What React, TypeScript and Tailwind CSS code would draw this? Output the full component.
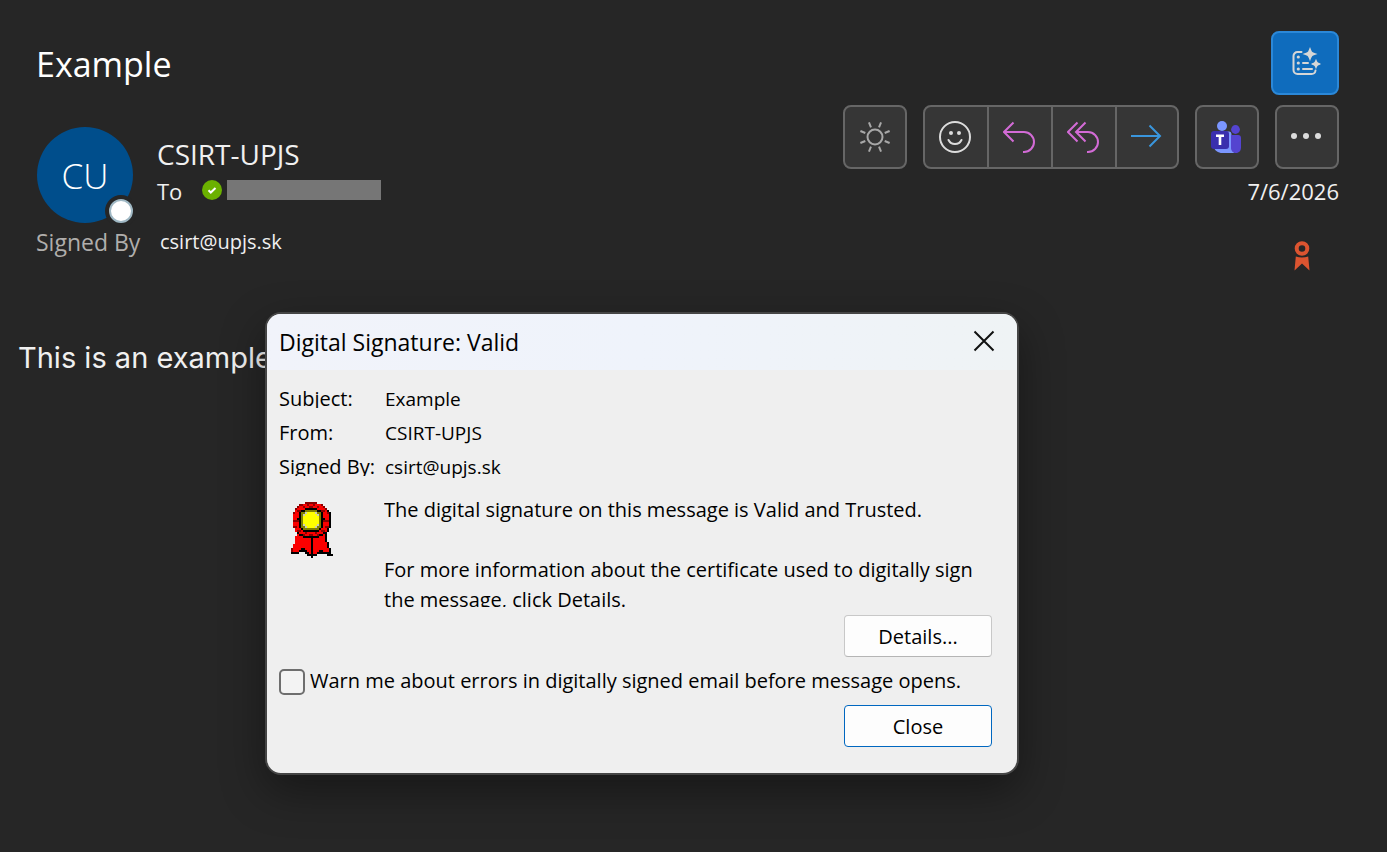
import React from "react";

const toolbarButton =
  "flex size-16 items-center justify-center rounded-lg border-2 border-[#666666] bg-[#363636]";
const groupButton = "flex h-full w-16 items-center justify-center border-r-2 border-[#666666]";
const dialogButton =
  "flex h-[42px] w-[148px] items-center justify-center rounded-sm border bg-[#fdfdfd] pt-0.5";

const ROSETTE = [
  ".......dddddd........",
  "....ddrrdrrdrrrd.....",
  "...drrdrrddrrdrrd....",
  "..drrrrKKKKKKrrrrd...",
  "..rddKKooooooKKddrK..",
  ".drrKoogyyyygooKrrdK.",
  ".rrrKogyyyyyygoKrrrK.",
  ".rrrKoyyyyyyyyoKrrrK.",
  ".rrKKoyyyyyyyyoKKrrK.",
  ".dddKoyyyyyyyyoKdddK.",
  ".rrrKoyyyyyyyyoKrrrK.",
  ".rrrKogyyyyyygoKrrrK.",
  ".ddrKoogyyyygooKrddK.",
  "..rrrKooooooooKrrrK..",
  "..rddrKKKKKKKKrddrK..",
  "...KrrrdrrrrdrrrKK...",
  "...rKKdrrddrrdKKrK...",
  "..rrrrKKKKKKKKrrrK...",
  "..rrrrrrrrKrrrrrrK...",
  "..rrrrrrrrKrrrrrrK...",
  "..rrrrrrrrKrrrrrrrK..",
  ".rrrrrrrrrKrrrrrrrK..",
  ".rrrrrrrrrKrrrrrrrK..",
  "drrrrKKrrrKrrrrrrrrK.",
  "drrrKKKKrrKrrrKKrrrK.",
  "KKKK...KKrKrrKKKKKKK.",
  "........KKKKK.....KKK",
  "..........K..........",
];
const ROSETTE_COLORS: Record<string, string> = {
  K: "#000000",
  r: "#fb0000",
  d: "#8b0000",
  o: "#808000",
  y: "#ffff00",
  g: "#c8c8c0",
};

function Rosette() {
  return (
    <svg className="h-14 w-[42px]" viewBox="0 0 21 28" shapeRendering="crispEdges" aria-hidden="true">
      {ROSETTE.flatMap((row, y) =>
        [...row].map((c, x) =>
          ROSETTE_COLORS[c] ? (
            <rect key={`${x}-${y}`} x={x} y={y} width="1" height="1" fill={ROSETTE_COLORS[c]} />
          ) : null,
        ),
      )}
    </svg>
  );
}

function SummaryIcon() {
  return (
    <svg className="size-8" viewBox="0 0 32 32" fill="none" aria-hidden="true">
      <path
        d="M12.500 5H8.500a4 4 0 0 0-4 4v14a4 4 0 0 0 4 4h14a4 4 0 0 0 4-3.500"
        stroke="#d6d6d6"
        strokeWidth="2"
        strokeLinecap="round"
      />
      <g fill="#d6d6d6">
        <circle cx="9.300" cy="10" r="1.600" />
        <circle cx="9.300" cy="16" r="1.600" />
        <circle cx="9.300" cy="22" r="1.600" />
        <path d="M21 0c.6 1.500 1.500 4.300 2.400 5 .9.700 3.300 1.300 5.100 2-1.800.8-4.200 1.300-5.100 2.100-.9.800-1.800 3.500-2.400 5.200-.6-1.700-1.500-4.400-2.400-5.200-.9-.8-3.300-1.300-5.100-2.100 1.800-.7 4.200-1.300 5.100-2C19.500 4.300 20.400 1.500 21 0Z" />
        <path d="M27 11.700c.5 1.300 1.100 2.900 1.800 3.500.7.500 2.200 1.100 3.200 1.800-1 .7-2.500 1.200-3.200 1.800-.7.600-1.300 2.200-1.800 3.500-.5-1.300-1.100-2.900-1.800-3.500-.7-.6-2.200-1.100-3.200-1.800 1-.7 2.500-1.300 3.200-1.800.7-.6 1.300-2.200 1.800-3.500Z" />
      </g>
      <path d="M14 16h5M14 22h9" stroke="#d6d6d6" strokeWidth="2" strokeLinecap="round" />
    </svg>
  );
}

function SunIcon() {
  return (
    <svg className="size-8" viewBox="0 0 32 32" fill="none" stroke="#a8a8a8" strokeWidth="2" aria-hidden="true">
      <circle cx="16" cy="16" r="7.500" />
      {[22.5, 67.5, 112.5, 157.5, 202.5, 247.5, 292.5, 337.5].map((a) => (
        <path key={a} d="M16 5.500V0.200" transform={`rotate(${a} 16 16)`} />
      ))}
    </svg>
  );
}

function SmileIcon() {
  return (
    <svg className="size-8" viewBox="0 0 32 32" fill="none" stroke="#dcdcdc" strokeWidth="2" aria-hidden="true">
      <circle cx="16" cy="16" r="15" />
      <path d="M9.500 19c2.800 5.400 10.200 5.400 13 0" strokeLinecap="round" />
      <circle cx="12" cy="12" r="2" fill="#dcdcdc" stroke="none" />
      <circle cx="20" cy="12" r="2" fill="#dcdcdc" stroke="none" />
    </svg>
  );
}

function ReplyIcon() {
  return (
    <svg className="size-8" viewBox="0 0 32 32" fill="none" stroke="#d36bd6" strokeWidth="2" aria-hidden="true">
      <path d="M10.500 1.500 1 11l9.500 9.500M1 11h20a10 10 0 0 1 0 20h-1" />
    </svg>
  );
}

function ReplyAllIcon() {
  return (
    <svg className="size-8" viewBox="0 0 32 32" fill="none" stroke="#d36bd6" strokeWidth="2" aria-hidden="true">
      <path d="M10.500 1.500 1 11l9.500 9.500M18.500 1.500 9 11l9.500 9.500M9 11h12a10 10 0 0 1 0 20h-1" />
    </svg>
  );
}

function ForwardIcon() {
  return (
    <svg className="size-8" viewBox="0 0 32 32" fill="none" stroke="#3a96dd" strokeWidth="2" aria-hidden="true">
      <path d="M1 15h29M19.500 4.500 30 15 19.500 25.500" />
    </svg>
  );
}

function TeamsIcon() {
  return (
    <svg className="size-8" viewBox="0 0 32 32" aria-hidden="true">
      <circle cx="24.500" cy="8.500" r="4.400" fill="#5444d0" />
      <circle cx="11" cy="5" r="5" fill="#7b96ff" />
      <path d="M14 10.500h4c1.700 0 2.500 1.300 2.500 3V26c0 3.500 1.500 5 3.500 6H11.500C7 32 3.500 29.500 3 26Z" fill="#7b96ff" />
      <path d="M20 14h7c2 0 3 1.200 3 3v9.500c0 3.200-2 5.500-5 5.500s-5-2.300-5-5.500Z" fill="#5444d0" />
      <rect x="0" y="10" width="18" height="18" rx="3" fill="#3a2fae" />
      <path d="M5 14.800h8M9 14.800V24" stroke="#fff" strokeWidth="2.600" />
    </svg>
  );
}

function Presence() {
  return (
    <svg className="size-5" viewBox="0 0 20 20" aria-hidden="true">
      <circle cx="10" cy="10" r="10" fill="#6bb100" />
      <path d="m6.500 10.200 2.300 2.300L13.500 8" fill="none" stroke="#fff" strokeWidth="2" />
    </svg>
  );
}

function SignedBadge() {
  return (
    <svg className="h-[30px] w-4" viewBox="0 0 16 30" aria-hidden="true">
      <circle cx="8" cy="7.500" r="5.300" fill="none" stroke="#dc5430" strokeWidth="4" />
      <path d="M1.800 15.500q6.200 2 12.400 0l1.300 14L8 22.500.5 29.500Z" fill="#dc5430" />
    </svg>
  );
}

function SignatureDialog() {
  return (
    <section
      role="dialog"
      aria-labelledby="dialog-title"
      className="absolute top-[312px] left-[265px] w-[754px] overflow-hidden rounded-2xl border-2 border-[#454545] bg-[#efefef] text-[20px] text-black shadow-[0_16px_44px_rgba(0,0,0,0.4)]"
    >
      <header className="flex h-14 items-center justify-between bg-linear-to-r from-[#f1f3fa] via-[#eff3fb] to-[#eff3f5] pr-[19px] pl-3">
        <h2 id="dialog-title" className="text-[23px]">
          Digital Signature: Valid
        </h2>
        <button aria-label="Close dialog" className="flex size-7 items-start justify-center">
          <svg className="size-6" viewBox="0 0 24 24" stroke="#111" strokeWidth="2" aria-hidden="true">
            <path d="m2.500 3.500 19 19M21.500 3.500l-19 19" />
          </svg>
        </button>
      </header>
      <div className="pt-[15px] pr-[25px] pb-[26px] pl-3">
        <dl className="grid auto-rows-[34px] grid-cols-[106px_1fr] leading-7">
          <dt className="h-[23px] overflow-hidden whitespace-nowrap">Subject:</dt>
          <dd className="text-[19px]">Example</dd>
          <dt className="whitespace-nowrap">From:</dt>
          <dd className="text-[19px]">CSIRT-UPJS</dd>
          <dt className="h-[23px] overflow-hidden whitespace-nowrap">Signed By:</dt>
          <dd className="text-[19px]">csirt@upjs.sk</dd>
        </dl>
        <div className="mt-2 flex">
          <div className="w-[105px] shrink-0 pt-[7px] pl-3">
            <Rosette />
          </div>
          <div className="h-[112px] overflow-hidden leading-[30px]">
            <p>The digital signature on this message is Valid and Trusted.</p>
            <p className="mt-[30px]">
              For more information about the certificate used to digitally sign
              <br />
              the message, click Details.
            </p>
          </div>
        </div>
        <div className="mt-2 flex justify-end">
          <button className={`${dialogButton} border-[#c8c8c8] border-b-[#b5b5b5]`}>Details...</button>
        </div>
        <label className="mt-[9px] flex h-[32px] items-center gap-[5px] whitespace-nowrap">
          <input
            type="checkbox"
            className="size-[26px] shrink-0 appearance-none rounded-[5px] border-2 border-[#6e6e6e] bg-[#f3f3f3]"
          />
          <span className="pb-0.5">Warn me about errors in digitally signed email before message opens.</span>
        </label>
        <div className="mt-[7px] flex justify-end">
          <button className={`${dialogButton} border-[#0067c0]`}>Close</button>
        </div>
      </div>
    </section>
  );
}

export default function App() {
  return (
    <main className="relative min-h-screen bg-[#262626] font-['Open_Sans','Noto_Sans',sans-serif] text-[#f0f0f0]">
      <header className="pt-[31px] pr-12 pl-9">
        <div className="flex h-16 items-center justify-between">
          <h1 className="pt-0.5 text-[34px] text-white">Example</h1>
          <button
            aria-label="Summarize"
            className="flex h-16 w-[68px] items-center justify-center rounded-lg border-2 border-[#2b88d8] bg-[#0f6cbd]"
          >
            <SummaryIcon />
          </button>
        </div>
        <div className="mt-[10px] flex justify-between">
          <div className="flex pt-[22px] pl-px">
            <div className="relative flex size-24 items-center justify-center rounded-full bg-[#004e8c] pt-0.5 text-[35px] font-light text-white">
              CU
              <span className="absolute -right-1 -bottom-1 size-8 rounded-full border-4 border-[#262626] bg-[#262626]">
                <span className="block size-6 rounded-full border-2 border-[#9fb8c4] bg-white" />
              </span>
            </div>
            <div className="pl-6">
              <p className="pt-[7px] text-[28px] leading-10">CSIRT-UPJS</p>
              <div className="flex h-8 items-center text-[22px]">
                <span className="w-[45px] pt-0.5">To</span>
                <Presence />
                <span className="ml-[5px] h-5 w-[154px] bg-[#767676]" />
              </div>
            </div>
          </div>
          <div className="flex flex-col items-end">
            <div className="flex gap-4">
              <button aria-label="Switch background" className={toolbarButton}>
                <SunIcon />
              </button>
              <div className="flex h-16 w-64 overflow-hidden rounded-lg border-2 border-[#666666] bg-[#363636]">
                <button aria-label="React" className={`${groupButton} pr-0.5`}>
                  <SmileIcon />
                </button>
                <button aria-label="Reply" className={`${groupButton} pr-0.5`}>
                  <ReplyIcon />
                </button>
                <button aria-label="Reply all" className={`${groupButton} pr-0.5`}>
                  <ReplyAllIcon />
                </button>
                <button aria-label="Forward" className="flex h-full flex-1 items-center justify-center pr-0.5">
                  <ForwardIcon />
                </button>
              </div>
              <button aria-label="Share to Teams" className={toolbarButton}>
                <TeamsIcon />
              </button>
              <button aria-label="More actions" className={toolbarButton}>
                <svg className="size-8" viewBox="0 0 32 32" fill="#dcdcdc" aria-hidden="true">
                  <circle cx="3" cy="15" r="3" />
                  <circle cx="15" cy="15" r="3" />
                  <circle cx="27" cy="15" r="3" />
                </svg>
              </button>
            </div>
            <time dateTime="2026-07-06" className="mt-1.5 text-[22px] leading-8">
              7/6/2026
            </time>
          </div>
        </div>
        <div className="mt-1 flex items-start justify-between">
          <p className="flex h-8 items-center pb-0.5">
            <span className="w-[124px] text-[23px] text-[#b0aeac]">Signed By</span>
            <span className="text-[20px]">csirt@upjs.sk</span>
          </p>
          <button aria-label="Signature details" className="mt-[14px] mr-[29px]">
            <SignedBadge />
          </button>
        </div>
      </header>
      <p className="mt-[67px] pl-[18px] font-['Inter',sans-serif] text-[29px] leading-10">This is an example</p>
      <SignatureDialog />
    </main>
  );
}
